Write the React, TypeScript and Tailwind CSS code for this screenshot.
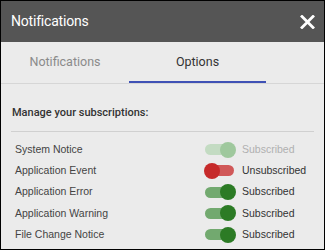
import React, { useState } from 'react';

type Sub = { label: string; on: boolean; disabled?: boolean };

const initial: Sub[] = [
  { label: 'System Notice', on: true, disabled: true },
  { label: 'Application Event', on: false },
  { label: 'Application Error', on: true },
  { label: 'Application Warning', on: true },
  { label: 'File Change Notice', on: true },
];

const Toggle: React.FC<{ on: boolean; disabled?: boolean; onClick: () => void }> = ({ on, disabled, onClick }) => {
  const track = disabled ? 'bg-[#c3dbc2]' : on ? 'bg-[#72a96f]' : 'bg-[#d05858]';
  const knob = disabled ? 'bg-[#9fc89d]' : on ? 'bg-[#2c7b25]' : 'bg-[#c62a2a]';
  return (
    <button
      type="button"
      disabled={disabled}
      onClick={onClick}
      className="relative w-[32px] h-[16px] flex items-center shrink-0"
    >
      <span className={`block w-[29px] h-[11px] rounded-full ml-[1px] ${track}`} />
      <span
        className={`absolute top-0 w-[16px] h-[16px] rounded-full ${knob} ${on ? 'left-[16px]' : 'left-0'}`}
      />
    </button>
  );
};

export default function App() {
  const [subs, setSubs] = useState(initial);
  const [tab, setTab] = useState(1);

  return (
    <div className="w-[325px] h-[250px] border border-black bg-[#ebebeb] flex flex-col overflow-hidden font-['Roboto',sans-serif]">
      {/* Title bar */}
      <div className="h-[41px] bg-[#555555] flex items-center justify-between pl-[10px] pr-[8px] shrink-0">
        <span className="text-white text-[14px] tracking-[-0.2px]">Notifications</span>
        <svg width="15" height="14" viewBox="0 0 15 14" className="mr-[1px]">
          <path d="M2 1.5 L13 12.5 M13 1.5 L2 12.5" stroke="#fff" strokeWidth="2.8" strokeLinecap="square" />
        </svg>
      </div>

      {/* Tabs */}
      <div className="flex h-[42px] border-b border-[#d6d6d6] shrink-0">
        <button
          onClick={() => setTab(0)}
          className={`w-[128px] pt-[2px] text-[12.5px] border-b-2 ${tab === 0 ? 'text-[#333] border-[#3f51b5]' : 'text-[#8a8a8a] border-transparent'}`}
        >
          Notifications
        </button>
        <button
          onClick={() => setTab(1)}
          className={`w-[137px] pt-[2px] text-[12.5px] border-b-2 ${tab === 1 ? 'text-[#333] border-[#3f51b5]' : 'text-[#8a8a8a] border-transparent'}`}
        >
          Options
        </button>
      </div>

      {/* Body */}
      <div className="px-[10px] pt-[22px]">
        <p className="text-[11px] leading-[14px] font-medium text-[#333] pl-[1px]">
          Manage your subscriptions:
        </p>
        <div className="mt-[11px] border-t border-[#d0d0d0]" />
        <div className="mt-[7px] flex flex-col pl-[4px]">
          {subs.map((s, i) => (
            <div key={s.label} className="flex items-center h-[21.25px]">
              <span className="w-[189px] text-[10.5px] text-[#444] font-['Liberation_Sans',sans-serif]">{s.label}</span>
              <Toggle
                on={s.on}
                disabled={s.disabled}
                onClick={() => setSubs(subs.map((x, j) => (j === i ? { ...x, on: !x.on } : x)))}
              />
              <span
                className={`ml-[6px] text-[10.5px] font-['Liberation_Sans',sans-serif] ${s.disabled ? 'text-[#b0b0b0]' : 'text-[#333]'}`}
              >
                {s.on ? 'Subscribed' : 'Unsubscribed'}
              </span>
            </div>
          ))}
        </div>
      </div>
    </div>
  );
}
